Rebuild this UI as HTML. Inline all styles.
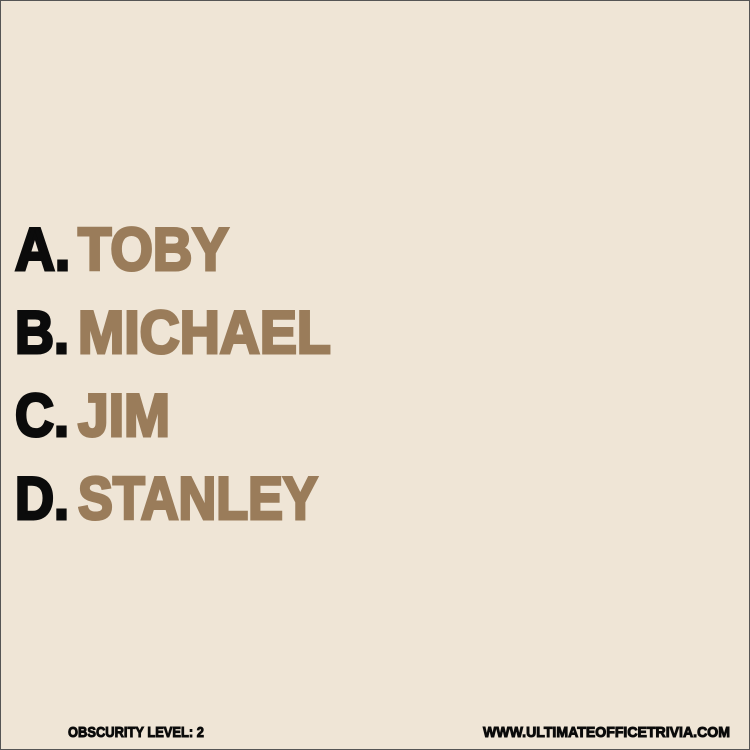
<!DOCTYPE html>
<html><head><style>
html,body{margin:0;padding:0}
body{width:750px;height:750px;background:#efe5d6;position:relative;overflow:hidden;font-family:"Liberation Sans",sans-serif;font-weight:bold}
.frame{position:absolute;left:0;top:0;width:748px;height:748px;border:1px solid #555}
.l{position:absolute;font-size:60px;line-height:60px;white-space:nowrap;transform-origin:0 0;-webkit-text-stroke:3px currentColor}
.k{color:#0b0b0b}
.b{color:#9a7c5a}
.f{position:absolute;font-size:15px;line-height:15px;color:#0b0b0b;white-space:nowrap;transform-origin:0 0;-webkit-text-stroke:1px #0b0b0b}
</style></head><body>
<div class="frame"></div>
<div class="l k" style="left:15px;top:220px;transform:scaleX(0.92)">A.</div>
<div class="l b" style="left:78px;top:220px;transform:scaleX(0.91)">TOBY</div>
<div class="l k" style="left:15px;top:303px;transform:scaleX(0.9)">B.</div>
<div class="l b" style="left:78px;top:303px;transform:scaleX(0.925)">MICHAEL</div>
<div class="l k" style="left:15px;top:386px;transform:scaleX(0.9)">C.</div>
<div class="l b" style="left:78px;top:386px;transform:scaleX(0.92)">JIM</div>
<div class="l k" style="left:15px;top:469px;transform:scaleX(0.9)">D.</div>
<div class="l b" style="left:78px;top:469px;transform:scaleX(0.87)">STANLEY</div>
<div class="f" style="left:68px;top:725px;transform:scaleX(0.86)">OBSCURITY LEVEL: 2</div>
<div class="f" style="left:483px;top:725px;transform:scaleX(0.94)">WWW.ULTIMATEOFFICETRIVIA.COM</div>
</body></html>
